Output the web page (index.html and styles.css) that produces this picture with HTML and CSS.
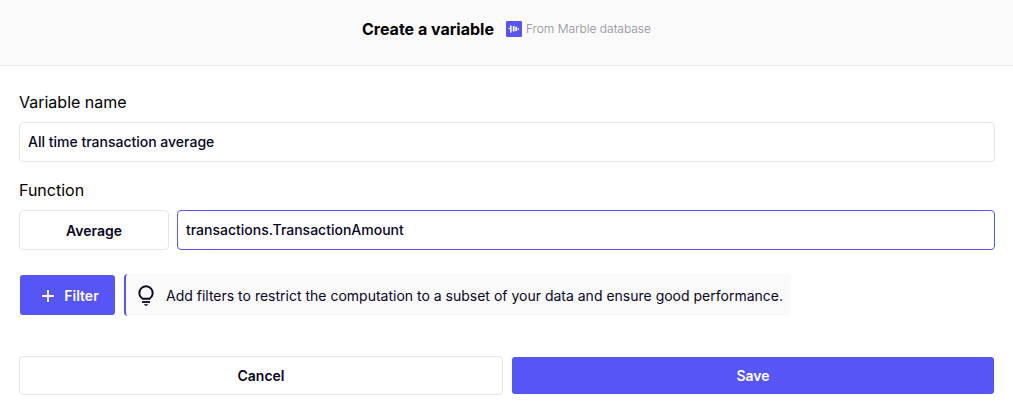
FILE: index.html
```html
<!DOCTYPE html>
<html lang="en">
<head>
<meta charset="utf-8">
<title>Create a variable</title>
<link rel="stylesheet" href="styles.css">
</head>
<body>
<header class="header">
  <h1 class="title">Create a variable</h1>
  <span class="source">
    <svg class="logo" viewBox="0 0 16 16" aria-hidden="true"><rect width="16" height="16" rx="1" fill="#5755f6"/><path d="M2.500 7.500H4" stroke="#fff" stroke-width="1"/><path d="M4.800 4.500v7" stroke="#fff" stroke-width="1.600"/><path d="M7.700 5v5.500M10.200 5.800V10" stroke="#fff" stroke-width="1.800"/><path d="M12.300 7v2" stroke="#fff" stroke-width="1.200"/></svg>
    From Marble database
  </span>
</header>
<form class="form">
  <label class="label" for="name">Variable name</label>
  <input class="field" id="name" type="text" value="All time transaction average">
  <label class="label" for="target">Function</label>
  <div class="function-row">
    <button class="button outline average" type="button">Average</button>
    <input class="field active" id="target" type="text" value="transactions.TransactionAmount">
  </div>
  <div class="filter-row">
    <button class="button primary filter" type="button">
      <svg class="plus" viewBox="0 0 24 24" aria-hidden="true"><path d="M12 6v12M6 12h12" stroke="currentColor" stroke-width="1.800"/></svg>
      Filter
    </button>
    <p class="tip">
      <svg class="bulb" viewBox="0 0 24 24" aria-hidden="true"><path d="M8.500 15.700A6.700 6.700 0 1 1 15.500 15.700z" fill="none" stroke="currentColor" stroke-width="1.900"/><path d="M8 19h8" stroke="currentColor" stroke-width="1.800"/><path d="M9.800 21.200h4.400l-1.400 1.600h-1.600z" fill="currentColor"/></svg>
      Add filters to restrict the computation to a subset of your data and ensure good performance.
    </p>
  </div>
  <div class="actions">
    <button class="button outline" type="button">Cancel</button>
    <button class="button primary" type="submit">Save</button>
  </div>
</form>
</body>
</html>
```
FILE: styles.css
```css
* { box-sizing: border-box; }
body { margin: 0; background: #fff; color: #080525; font-family: Inter, sans-serif; font-size: 14px; line-height: 20px; }
.header { display: flex; align-items: center; justify-content: center; gap: 12px; padding: 17px 24px 24px; border-bottom: 1px solid #e5e5e5; background: #fafafa; }
.title { margin: 0; color: #000; font-size: 16px; line-height: 24px; font-weight: 700; }
.source { display: flex; align-items: center; gap: 4px; color: #8e8d98; font-size: 12px; font-weight: 300; line-height: 16px; }
.logo { width: 16px; height: 16px; }
.form { display: flex; flex-direction: column; padding: 24px 18px 18px 19px; }
.label { margin-bottom: 8px; color: #000; font-size: 16px; line-height: 24px; }
.field { width: 100%; min-width: 0; height: 40px; margin: 0; padding: 0 8px 1px; border: 1px solid #e5e5e5; border-radius: 4px; outline: 0; background: #fff; color: inherit; font: inherit; font-weight: 500; }
.field + .label { margin-top: 16px; }
.active { border-color: #5755f6; }
.function-row { display: flex; gap: 8px; }
.button { display: flex; align-items: center; justify-content: center; gap: 4px; padding: 8px 16px; border: 1px solid #e5e5e5; border-radius: 4px; background: #fff; color: inherit; font: inherit; font-weight: 600; }
.primary { border-color: transparent; background: #5755f6; background-clip: padding-box; color: #fff; }
.average { flex: 0 0 150px; padding-top: 10px; }
.filter-row { display: flex; align-items: stretch; gap: 8px; margin-top: 24px; }
.filter { flex: 0 0 97px; padding-top: 10px; }
.plus { width: 24px; height: 24px; margin: -2px 0; }
.tip { display: flex; align-items: center; gap: 8px; margin: 0; padding: 10px 8px 8px; border-left: 2px solid #5755f6; border-radius: 4px; background: #fafafa; line-height: 24px; }
.bulb { flex: none; width: 24px; height: 24px; margin-top: -2px; }
.actions { display: grid; grid-template-columns: 1fr 1fr; gap: 8px; margin-top: 40px; }
.actions .button { height: 39px; }
```
